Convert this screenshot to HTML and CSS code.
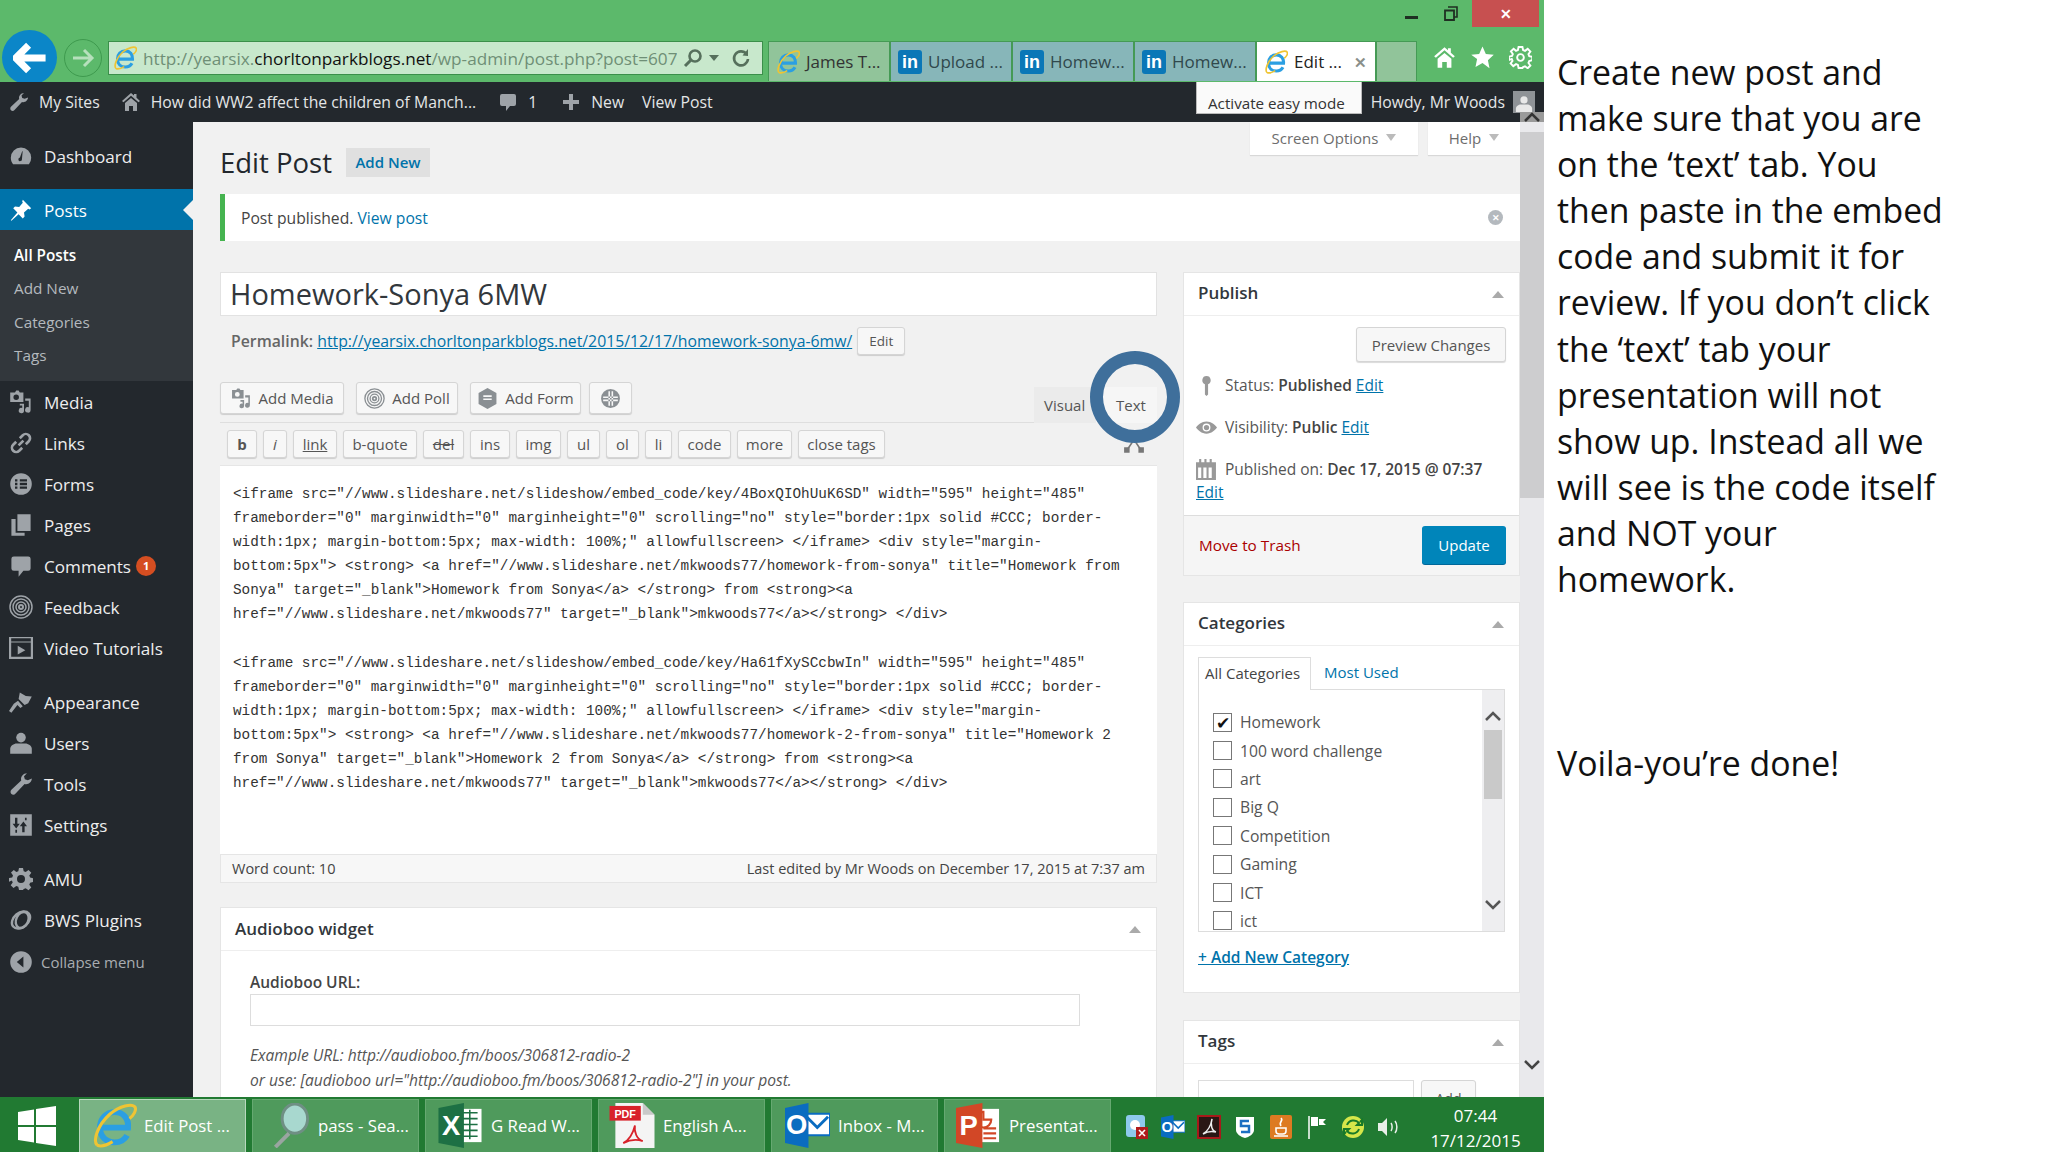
FILE: index.html
```html
<!DOCTYPE html>
<html lang="en">
<head>
<meta charset="utf-8">
<title>Edit Post</title>
<link rel="stylesheet" href="styles.css">
</head>
<body>
<svg class="defs" width="0" height="0" aria-hidden="true">
  <symbol id="ie" viewBox="0 0 32 32">
    <path d="M8 17.500h18c.6-6.500-3.500-11-9.500-11S6 11 6 17.500 10.500 28 16.500 28c4 0 7-1.800 8.800-5" fill="none" stroke="#2b9fe2" stroke-width="4.200"/>
    <path d="M4 30C1 27 4 16 13 8 20 2 29 0 31 3c1 2-1 6-4 8M4 30c3 1.500 7 0 11-2.500" fill="none" stroke="#efc433" stroke-width="2.200"/>
  </symbol>
  <symbol id="s-dash" viewBox="0 0 20 20"><path d="M10 3a8.500 8.500 0 0 0-8.500 8.500c0 2 .7 3.900 1.900 5.400h13.200a8.500 8.500 0 0 0 1.900-5.400A8.500 8.500 0 0 0 10 3zm.8 9.500a1.500 1.500 0 1 1-1.700-1.200L11 6l.4.100z" fill="currentColor"/></symbol>
  <symbol id="s-pin" viewBox="0 0 20 20"><path d="M11.500 1.500l7 7-1.500 1-1-.5-3.500 3 .5 3.500-1.500 1.500-3.500-3.500L2 19l-.5-.5 5.500-6.500L3.500 8.500 5 7l3.500.5 3-3.500-.5-1z" fill="currentColor"/></symbol>
  <symbol id="s-media" viewBox="0 0 20 20"><path d="M1 2h4l1-1.500h2L9 2h3v8H1zm5 1.800a2.300 2.300 0 1 0 0 4.600 2.300 2.300 0 0 0 0-4.600zM13.500 7H18v9.500a2.300 2.300 0 1 1-1.500-2.100V9h-3zM9 11.500h3.500V17a2.200 2.200 0 1 1-1.500-2v-2H9z" fill="currentColor" fill-rule="evenodd"/></symbol>
  <symbol id="s-link" viewBox="0 0 20 20"><path d="M8 12l4-4M9 6l2.500-2.500a3.500 3.500 0 0 1 5 5L14 11M11 14l-2.500 2.500a3.500 3.500 0 0 1-5-5L6 9" fill="none" stroke="currentColor" stroke-width="2.200"/></symbol>
  <symbol id="s-forms" viewBox="0 0 20 20"><path d="M10 1a9 9 0 1 1 0 18 9 9 0 0 1 0-18zM5 6v2h2V6zm4 0v2h6V6zm-4 3v2h2V9zm4 0v2h6V9zm-4 3v2h2v-2zm4 0v2h6v-2z" fill="currentColor" fill-rule="evenodd"/></symbol>
  <symbol id="s-hex" viewBox="0 0 20 20"><path d="M10 0l8.500 4.800v10.400L10 20l-8.500-4.800V4.800zM6 7v1.500h8V7zm0 3v1.500h8V10z" fill="currentColor" fill-rule="evenodd"/></symbol>
  <symbol id="s-pages" viewBox="0 0 20 20"><path d="M7 1h11v14H7zM2 5h3.500v11.500H13V19H2z" fill="currentColor"/></symbol>
  <symbol id="s-comment" viewBox="0 0 20 20"><path d="M4 2h12a2 2 0 0 1 2 2v8a2 2 0 0 1-2 2h-4l-4 5v-5H4a2 2 0 0 1-2-2V4a2 2 0 0 1 2-2z" fill="currentColor"/></symbol>
  <symbol id="s-feedback" viewBox="0 0 24 24"><g fill="none" stroke="currentColor"><circle cx="12" cy="12" r="11" stroke-width="1.500"/><circle cx="12" cy="12" r="8" stroke-width="1.500"/><circle cx="12" cy="12" r="5" stroke-width="1.500"/><circle cx="12" cy="12" r="2" stroke-width="2"/></g></symbol>
  <symbol id="s-video" viewBox="0 0 22 20"><path d="M0 0h22v20H0zm2 5v13h18V5zm6 3l7 4-7 4zM2 1v3h18V1z" fill="currentColor" fill-rule="evenodd"/></symbol>
  <symbol id="s-brush" viewBox="0 0 20 20"><path d="M9 2l5 3 5 .5-3 5.500-3 1.500L8 7.500zM7.500 9l4 4.500-2 1.500L7 12.500 2 19l-2-1.500 4-6z" fill="currentColor"/></symbol>
  <symbol id="s-users" viewBox="0 0 20 20"><circle cx="10" cy="5.500" r="4" fill="currentColor"/><path d="M1 19v-4c0-2.500 3-4.500 5.500-4.500h7c2.500 0 5.500 2 5.500 4.500v4z" fill="currentColor"/></symbol>
  <symbol id="s-wrench" viewBox="0 0 20 20"><path d="M19 5.500c0 3-3.200 5.400-6 4.500l-7.500 8c-1 1.200-2.500 1.300-3.500.3S1 15.500 2.200 14.500l8-7.500C9.300 4 12 1 15 1l-2.500 2.600.7 2.500 2.500.7z" fill="currentColor"/></symbol>
  <symbol id="s-settings" viewBox="0 0 20 20"><path d="M1 1h18v18H1zm4 3v5H3l3 4 3-4H7V4zm8 12v-5h2l-3-4-3 4h2v5zM5.300 14v2.500h1.400V14zm8-10v2h1.400V4z" fill="currentColor" fill-rule="evenodd"/></symbol>
  <symbol id="s-gear" viewBox="0 0 24 24"><path d="M10 1h4l.7 3.200 2 .8L19.500 3l2.800 2.800-2 2.800.8 2 3.200.7v3.600l-3.200.8-.8 2 2 2.700-2.800 2.800-2.800-2-2 .8L14 23h-4l-.7-3.200-2-.8-2.800 2-2.800-2.800 2-2.700-.8-2L0 14.700v-3.600l3.200-.7.800-2-2-2.800L4.800 3l2.500 2 2-.8zM12 8a4 4 0 1 0 0 8 4 4 0 0 0 0-8z" fill="currentColor" fill-rule="evenodd"/></symbol>
  <symbol id="s-gear-o" viewBox="0 0 24 24"><path d="M10 1h4l.7 3.200 2 .8L19.500 3l2.800 2.800-2 2.800.8 2 3.200.7v3.600l-3.200.8-.8 2 2 2.700-2.800 2.800-2.800-2-2 .8L14 23h-4l-.7-3.200-2-.8-2.800 2-2.800-2.800 2-2.700-.8-2L0 14.700v-3.600l3.200-.7.800-2-2-2.800L4.800 3l2.500 2 2-.8z" fill="none" stroke="currentColor" stroke-width="2"/><circle cx="12" cy="12" r="3.500" fill="none" stroke="currentColor" stroke-width="2"/></symbol>
  <symbol id="s-swirl" viewBox="0 0 20 20"><g fill="none" stroke="currentColor" stroke-width="2"><ellipse cx="10" cy="10" rx="8.500" ry="6" transform="rotate(-40 10 10)"/><ellipse cx="11" cy="10" rx="5" ry="7" transform="rotate(25 11 10)"/></g></symbol>
  <symbol id="s-collapse" viewBox="0 0 20 20"><path d="M10 1a9 9 0 1 1 0 18 9 9 0 0 1 0-18zm2 4.500L6.500 10l5.500 4.500z" fill="currentColor" fill-rule="evenodd"/></symbol>
  <symbol id="s-home" viewBox="0 0 20 20"><path d="M10 1l3 2.600V2h2.500v3.800L19 9l-1.500 1.200L10 3.700 2.500 10.200 1 9zM4 11l6-5 6 5v8h-4v-5H8v5H4z" fill="currentColor"/></symbol>
  <symbol id="s-star" viewBox="0 0 20 20"><path d="M10 .5l2.900 6.400 6.900.8-5.100 4.700 1.400 6.900L10 14.800l-6.100 3.500 1.400-6.900L.2 7.700l6.900-.8z" fill="currentColor"/></symbol>
  <symbol id="s-plus" viewBox="0 0 20 20"><path d="M8 2h4v6h6v4h-6v6H8v-6H2V8h6z" fill="currentColor"/></symbol>
  <symbol id="s-mag" viewBox="0 0 41 46"><ellipse cx="26" cy="16" rx="13" ry="15" fill="#a8d8cf" stroke="#6f8f84" stroke-width="3"/><path d="M20 31L6 45" stroke="#9aa5a1" stroke-width="4" fill="none"/></symbol>
  <symbol id="s-search" viewBox="0 0 20 20"><circle cx="12" cy="8" r="5.500" fill="none" stroke="currentColor" stroke-width="2.600"/><path d="M8 12l-6 6" stroke="currentColor" stroke-width="3"/></symbol>
  <symbol id="s-refresh" viewBox="0 0 20 20"><path d="M15.500 6A7 7 0 1 0 17 11" fill="none" stroke="currentColor" stroke-width="2.600"/><path d="M11.500 7.500L17 1v7z" fill="currentColor"/></symbol>
  <symbol id="s-thumb" viewBox="0 0 16 20"><path d="M8 1a4 4 0 0 1 1.500 7.700V18.500L8 20l-1.500-1.500V8.700A4 4 0 0 1 8 1z" fill="currentColor"/></symbol>
  <symbol id="s-eye" viewBox="0 0 24 14"><path d="M12 0c5.500 0 10 4 12 7-2 3-6.500 7-12 7S2 10 0 7c2-3 6.500-7 12-7zm0 2.500a4.500 4.500 0 1 0 0 9 4.500 4.500 0 0 0 0-9z" fill="currentColor" fill-rule="evenodd"/><circle cx="12" cy="7" r="3" fill="currentColor"/></symbol>
  <symbol id="s-cal" viewBox="0 0 20 20"><path d="M0 3h3V0h2v3h3V0h2v3h3V0h2v3h4v17H0zm2 5v10h3V8zm5 0v10h3V8zm5 0v10h3V8z" fill="currentColor" fill-rule="evenodd"/></symbol>
  <symbol id="s-globe" viewBox="0 0 20 20"><path d="M10 1a9 9 0 1 1 0 18 9 9 0 0 1 0-18zM3 8v1.500h14V8zm0 3v1.500h14V11zM8 3v14h1.500V3zm3 0v14h1.500V3z" fill="currentColor" fill-rule="evenodd"/></symbol>
  <symbol id="s-full" viewBox="0 0 20 20"><path d="M10 6l-6 9M10 6l6 9" fill="none" stroke="currentColor" stroke-width="1.500"/><path d="M7 3h6v5H7zM1 13h5v5H1zM14 13h5v5h-5z" fill="currentColor"/></symbol>
  <symbol id="s-restore" viewBox="0 0 14 15"><path d="M4 1h9v10h-3" fill="none" stroke="#1f2f22" stroke-width="1.600"/><path d="M1 4.500h9V14H1z" fill="none" stroke="#1f2f22" stroke-width="1.800"/></symbol>
  <symbol id="s-win" viewBox="0 0 40 40"><path d="M1 6l16-2.500V19H1zM19 3l20-3v19H19zM1 21h16v15.500L1 34zM19 21h20v19l-20-3z" fill="#fff"/></symbol>
  <symbol id="s-flag" viewBox="0 0 20 24"><path d="M2 1v23" stroke="#fff" stroke-width="1.500"/><path d="M4 2h7v9H4zM12 4h7l-3 3 3 3h-7z" fill="#fff"/></symbol>
  <symbol id="s-speaker" viewBox="0 0 24 22"><path d="M1 7h4l5-5v18l-5-5H1z" fill="#e8efe8"/><path d="M14 7c1.500 2 1.500 6 0 8M18 5c2.500 3 2.500 9 0 12" fill="none" stroke="#e8efe8" stroke-width="1.500"/></symbol>
  <symbol id="s-sync" viewBox="0 0 24 24"><circle cx="12" cy="12" r="11" fill="#d6e64a"/><path d="M6 10a7 7 0 0 1 12-2l-2 2h5V5l-2 2M18 14a7 7 0 0 1-12 2l2-2H3v5l2-2" fill="none" stroke="#187a28" stroke-width="2"/></symbol>
  <symbol id="s-shield" viewBox="0 0 20 24"><path d="M1 2h18v13c0 4-5 7-9 8-4-1-9-4-9-8z" fill="#fff"/><path d="M14 6H6v5h8v6H6" fill="none" stroke="#1c6fc2" stroke-width="2.500"/></symbol>
  <symbol id="s-excel" viewBox="0 0 46 46">
    <path d="M22 6h23v34H22z" fill="#fff"/>
    <path d="M26 10h15M26 16h15M26 22h15M26 28h15M26 34h15M33 7v30" stroke="#1d7044" stroke-width="1.600" fill="none"/>
    <path d="M1 5L27 0v46L1 41z" fill="#1d7044"/>
    <text class="svg-app svg-x" x="14" y="33" text-anchor="middle">X</text>
  </symbol>
  <symbol id="s-pdf" viewBox="0 0 46 46">
    <path d="M6 0h28l12 12v34H6z" fill="#f4f4f4"/>
    <path d="M34 0l12 12H34z" fill="#c9c9c9"/>
    <path d="M0 3h32v15H0z" fill="#d8222a"/>
    <text class="svg-app svg-pdf" x="16" y="15" text-anchor="middle">PDF</text>
    <path d="M26 23c-2 8-6 15-12 18 6-3 14-4 20-2-6-2-9-9-8-16z" fill="none" stroke="#d8222a" stroke-width="1.800"/>
  </symbol>
  <symbol id="s-outlook" viewBox="0 0 46 46">
    <path d="M20 11h26v22H20z" fill="#fff" stroke="#0a6cc0" stroke-width="2"/>
    <path d="M22 14l11 11 11-11" fill="none" stroke="#0a6cc0" stroke-width="3"/>
    <path d="M0 5L24 0v46L0 41z" fill="#0a6cc0"/>
    <text class="svg-app svg-o" x="12" y="32" text-anchor="middle">O</text>
  </symbol>
  <symbol id="s-ppt" viewBox="0 0 46 46">
    <path d="M22 6h22v34H22z" fill="#fff"/>
    <path d="M28 9a8 8 0 1 0 8 8h-8zM28 26h13M28 31h13M28 36h13" fill="none" stroke="#d24726" stroke-width="2.200"/>
    <path d="M0 5L27 0v46L0 41z" fill="#d24726"/>
    <text class="svg-app svg-x" x="13" y="33" text-anchor="middle">P</text>
  </symbol>
  <symbol id="s-qt" viewBox="0 0 24 24">
    <rect x="1" y="0" width="19" height="22" rx="3" fill="#8ec9ec"/>
    <circle cx="10" cy="10" r="5" fill="#fff"/>
    <rect x="11" y="12" width="12" height="12" fill="#b01c1c"/>
    <path d="M14 15l6 6M20 15l-6 6" stroke="#fff" stroke-width="1.600"/>
  </symbol>
  <symbol id="s-acrobat" viewBox="0 0 24 24">
    <rect x="1" y="1" width="22" height="22" fill="#2a1714" stroke="#a61a1a" stroke-width="2"/>
    <path d="M15 4c-1 6-4 12-9 15 5-3 9-3 13-2-4-1-6-7-4-13z" fill="none" stroke="#eee" stroke-width="1.500"/>
  </symbol>
  <symbol id="s-java" viewBox="0 0 24 24">
    <rect x="1" y="0" width="22" height="24" rx="2" fill="#dd7a22"/>
    <path d="M12 3c3 3-3 4 0 8M7 13h10v3a3 3 0 0 1-3 3h-4a3 3 0 0 1-3-3zM5 21h14" fill="none" stroke="#fff" stroke-width="1.600"/>
  </symbol>
</svg>

<div class="window">
  <header class="chrome">
    <div class="titlebar">
      <span class="win-min"></span>
      <svg class="win-restore"><use href="#s-restore"/></svg>
      <span class="win-close">&#x2715;</span>
    </div>
    <div class="navrow">
      <span class="nav-back"><svg class="nav-arrow" viewBox="0 0 24 24"><path d="M11 3L2 12l9 9M3 12h20" fill="none" stroke="#fff" stroke-width="5"/></svg></span>
      <span class="nav-forward"><svg class="nav-arrow-sm" viewBox="0 0 24 24"><path d="M13 4l8 8-8 8M20 12H2" fill="none" stroke="#b6e0bc" stroke-width="3"/></svg></span>
      <div class="address">
        <svg class="ic-ie"><use href="#ie"/></svg>
        <span class="url">http://yearsix.<b>chorltonparkblogs.net</b>/wp-admin/post.php?post=607</span>
        <svg class="addr-ic"><use href="#s-search"/></svg>
        <span class="addr-drop"></span>
        <svg class="addr-ic"><use href="#s-refresh"/></svg>
      </div>
      <div class="tabs">
        <div class="tab tab-ie"><svg class="ic-ie"><use href="#ie"/></svg><span>James T...</span></div>
        <div class="tab tab-li"><span class="li">in</span><span>Upload ...</span></div>
        <div class="tab tab-li"><span class="li">in</span><span>Homew...</span></div>
        <div class="tab tab-li"><span class="li">in</span><span>Homew...</span></div>
        <div class="tab tab-active"><svg class="ic-ie"><use href="#ie"/></svg><span>Edit ...</span><span class="tab-x">&#x2715;</span></div>
        <div class="tab tab-new"></div>
      </div>
      <div class="tools">
        <svg class="tool-ic"><use href="#s-home"/></svg>
        <svg class="tool-ic"><use href="#s-star"/></svg>
        <svg class="tool-ic"><use href="#s-gear-o"/></svg>
      </div>
    </div>
  </header>

  <div class="adminbar">
    <div class="ab-item"><svg class="ab-ic"><use href="#s-wrench"/></svg>My Sites</div>
    <div class="ab-item"><svg class="ab-ic"><use href="#s-home"/></svg>How did WW2 affect the children of Manch...</div>
    <div class="ab-item"><svg class="ab-ic"><use href="#s-comment"/></svg>1</div>
    <div class="ab-item"><svg class="ab-ic"><use href="#s-plus"/></svg>New</div>
    <div class="ab-item">View Post</div>
    <div class="ab-right">
      <span>Howdy, Mr Woods</span>
      <span class="avatar"><svg class="avatar-ic"><use href="#s-users"/></svg></span>
    </div>
    <div class="easy-tip">Activate easy mode</div>
  </div>

  <div class="main">
    <nav class="sidebar">
      <a class="mi"><svg class="mi-ic"><use href="#s-dash"/></svg>Dashboard</a>
      <a class="mi mi-active mi-gap"><svg class="mi-ic"><use href="#s-pin"/></svg>Posts</a>
      <div class="submenu">
        <a class="sub sub-current">All Posts</a>
        <a class="sub">Add New</a>
        <a class="sub">Categories</a>
        <a class="sub">Tags</a>
      </div>
      <a class="mi"><svg class="mi-ic"><use href="#s-media"/></svg>Media</a>
      <a class="mi"><svg class="mi-ic"><use href="#s-link"/></svg>Links</a>
      <a class="mi"><svg class="mi-ic"><use href="#s-forms"/></svg>Forms</a>
      <a class="mi"><svg class="mi-ic"><use href="#s-pages"/></svg>Pages</a>
      <a class="mi"><svg class="mi-ic"><use href="#s-comment"/></svg>Comments<span class="badge">1</span></a>
      <a class="mi"><svg class="mi-ic"><use href="#s-feedback"/></svg>Feedback</a>
      <a class="mi"><svg class="mi-ic"><use href="#s-video"/></svg>Video Tutorials</a>
      <a class="mi mi-gap"><svg class="mi-ic"><use href="#s-brush"/></svg>Appearance</a>
      <a class="mi"><svg class="mi-ic"><use href="#s-users"/></svg>Users</a>
      <a class="mi"><svg class="mi-ic"><use href="#s-wrench"/></svg>Tools</a>
      <a class="mi"><svg class="mi-ic"><use href="#s-settings"/></svg>Settings</a>
      <a class="mi mi-gap"><svg class="mi-ic"><use href="#s-gear"/></svg>AMU</a>
      <a class="mi"><svg class="mi-ic"><use href="#s-swirl"/></svg>BWS Plugins</a>
      <a class="mi mi-collapse"><svg class="mi-ic"><use href="#s-collapse"/></svg>Collapse menu</a>
    </nav>

    <section class="content">
      <div class="screen-meta">
        <div class="meta-tab meta-screen">Screen Options<i class="caret"></i></div>
        <div class="meta-tab meta-help">Help<i class="caret"></i></div>
      </div>
      <div class="heading">
        <h1>Edit Post</h1>
        <a class="add-new">Add New</a>
      </div>
      <div class="notice">
        <span>Post published. <a>View post</a></span>
        <span class="dismiss">&#x2715;</span>
      </div>
      <div class="columns">
        <div class="col-main">
          <div class="title-box">Homework-Sonya 6MW</div>
          <div class="permalink">
            <span><b>Permalink:</b> <a class="ul">http://yearsix.chorltonparkblogs.net/2015/12/17/homework-sonya-6mw/</a></span>
            <span class="btn btn-edit">Edit</span>
          </div>
          <div class="media-row">
            <span class="btn btn-media w-media"><svg class="btn-ic"><use href="#s-media"/></svg>Add Media</span>
            <span class="btn btn-media w-poll"><svg class="btn-ic"><use href="#s-feedback"/></svg>Add Poll</span>
            <span class="btn btn-media w-form"><svg class="btn-ic"><use href="#s-hex"/></svg>Add Form</span>
            <span class="btn btn-media btn-globe"><svg class="btn-ic"><use href="#s-globe"/></svg></span>
            <div class="editor-tabs">
              <span class="etab">Visual</span>
              <span class="etab etab-on">Text</span>
            </div>
          </div>
          <div class="qt-bar">
            <span class="qt q-b"><b>b</b></span>
            <span class="qt q-i"><i>i</i></span>
            <span class="qt q-link"><u>link</u></span>
            <span class="qt q-quote">b-quote</span>
            <span class="qt q-del"><s>del</s></span>
            <span class="qt q-ins">ins</span>
            <span class="qt q-img">img</span>
            <span class="qt q-ul">ul</span>
            <span class="qt q-ol">ol</span>
            <span class="qt q-li">li</span>
            <span class="qt q-code">code</span>
            <span class="qt q-more">more</span>
            <span class="qt q-close">close tags</span>
            <svg class="fullscreen"><use href="#s-full"/></svg>
          </div>
          <div class="code">&lt;iframe src="//www.slideshare.net/slideshow/embed_code/key/4BoxQIOhUuK6SD" width="595" height="485"
frameborder="0" marginwidth="0" marginheight="0" scrolling="no" style="border:1px solid #CCC; border-
width:1px; margin-bottom:5px; max-width: 100%;" allowfullscreen> &lt;/iframe> &lt;div style="margin-
bottom:5px"> &lt;strong> &lt;a href="//www.slideshare.net/mkwoods77/homework-from-sonya" title="Homework from
Sonya" target="_blank">Homework from Sonya&lt;/a> &lt;/strong> from &lt;strong>&lt;a
href="//www.slideshare.net/mkwoods77" target="_blank">mkwoods77&lt;/a>&lt;/strong> &lt;/div>

&lt;iframe src="//www.slideshare.net/slideshow/embed_code/key/Ha61fXySCcbwIn" width="595" height="485"
frameborder="0" marginwidth="0" marginheight="0" scrolling="no" style="border:1px solid #CCC; border-
width:1px; margin-bottom:5px; max-width: 100%;" allowfullscreen> &lt;/iframe> &lt;div style="margin-
bottom:5px"> &lt;strong> &lt;a href="//www.slideshare.net/mkwoods77/homework-2-from-sonya" title="Homework 2
from Sonya" target="_blank">Homework 2 from Sonya&lt;/a> &lt;/strong> from &lt;strong>&lt;a
href="//www.slideshare.net/mkwoods77" target="_blank">mkwoods77&lt;/a>&lt;/strong> &lt;/div></div>
          <div class="statusbar">
            <span>Word count: 10</span>
            <span>Last edited by Mr Woods on December 17, 2015 at 7:37 am</span>
          </div>
          <div class="box box-audio">
            <div class="box-head"><h2>Audioboo widget</h2><i class="collapse"></i></div>
            <div class="audio-body">
              <label>Audioboo URL:</label>
              <div class="audio-input"></div>
              <p>Example URL: http://audioboo.fm/boos/306812-radio-2</p>
              <p>or use: [audioboo url="http://audioboo.fm/boos/306812-radio-2"] in your post.</p>
            </div>
          </div>
        </div>

        <aside class="col-side">
          <div class="box box-publish">
            <div class="box-head"><h2>Publish</h2><i class="collapse"></i></div>
            <div class="pub-body">
              <div class="pub-preview"><span class="btn btn-preview">Preview Changes</span></div>
              <div class="pub-row"><svg class="pub-ic"><use href="#s-thumb"/></svg><span>Status: <b>Published</b> <a class="ul">Edit</a></span></div>
              <div class="pub-row"><svg class="pub-ic"><use href="#s-eye"/></svg><span>Visibility: <b>Public</b> <a class="ul">Edit</a></span></div>
              <div class="pub-row"><svg class="pub-ic"><use href="#s-cal"/></svg><span>Published on: <b>Dec 17, 2015 @ 07:37</b></span></div>
              <a class="ul pub-edit">Edit</a>
            </div>
            <div class="pub-foot">
              <a class="trash">Move to Trash</a>
              <span class="update">Update</span>
            </div>
          </div>

          <div class="box box-cats">
            <div class="box-head"><h2>Categories</h2><i class="collapse"></i></div>
            <div class="cat-body">
              <div class="cat-tabs">
                <span class="cat-tab cat-tab-on">All Categories</span>
                <a class="cat-tab">Most Used</a>
              </div>
              <div class="cat-panel">
                <ul class="cat-list">
                  <li><span class="check checked">&#x2714;</span>Homework</li>
                  <li><span class="check"></span>100 word challenge</li>
                  <li><span class="check"></span>art</li>
                  <li><span class="check"></span>Big Q</li>
                  <li><span class="check"></span>Competition</li>
                  <li><span class="check"></span>Gaming</li>
                  <li><span class="check"></span>ICT</li>
                  <li><span class="check"></span>ict</li>
                </ul>
                <div class="cat-scroll">
                  <svg class="chev" viewBox="0 0 16 10"><path d="M1 9l7-7 7 7" fill="none" stroke="currentColor" stroke-width="2.500"/></svg>
                  <span class="cat-thumb"></span>
                  <svg class="chev chev-down" viewBox="0 0 16 10"><path d="M1 1l7 7 7-7" fill="none" stroke="currentColor" stroke-width="2.500"/></svg>
                </div>
              </div>
              <a class="add-cat">+ Add New Category</a>
            </div>
          </div>

          <div class="box box-tags">
            <div class="box-head"><h2>Tags</h2><i class="collapse"></i></div>
            <div class="tags-body">
              <div class="tags-input"></div>
              <span class="btn btn-add">Add</span>
            </div>
          </div>
        </aside>
      </div>
    </section>

    <div class="scrollbar">
      <svg class="sb-up" viewBox="0 0 24 10"><path d="M5 9l7-7 7 7" fill="none" stroke="currentColor" stroke-width="2.500"/></svg>
      <span class="sb-thumb"></span>
      <svg class="sb-down" viewBox="0 0 16 10"><path d="M1 1l7 7 7-7" fill="none" stroke="currentColor" stroke-width="2.500"/></svg>
    </div>

    <span class="ring"></span>
  </div>

  <footer class="taskbar">
    <div class="start"><svg class="start-ic"><use href="#s-win"/></svg></div>
    <div class="task task-on"><svg class="task-ic i-ie"><use href="#ie"/></svg><span>Edit Post ...</span></div>
    <div class="task"><svg class="task-ic i-mag"><use href="#s-mag"/></svg><span>pass - Sea...</span></div>
    <div class="task"><svg class="task-ic i-excel"><use href="#s-excel"/></svg><span>G Read W...</span></div>
    <div class="task"><svg class="task-ic i-pdf"><use href="#s-pdf"/></svg><span>English A...</span></div>
    <div class="task"><svg class="task-ic i-out"><use href="#s-outlook"/></svg><span>Inbox - M...</span></div>
    <div class="task"><svg class="task-ic i-ppt"><use href="#s-ppt"/></svg><span>Presentat...</span></div>
    <div class="tray">
      <svg class="tray-ic"><use href="#s-qt"/></svg>
      <svg class="tray-ic"><use href="#s-outlook"/></svg>
      <svg class="tray-ic"><use href="#s-acrobat"/></svg>
      <svg class="tray-ic"><use href="#s-shield"/></svg>
      <svg class="tray-ic"><use href="#s-java"/></svg>
      <svg class="tray-ic"><use href="#s-flag"/></svg>
      <svg class="tray-ic"><use href="#s-sync"/></svg>
      <svg class="tray-ic"><use href="#s-speaker"/></svg>
    </div>
    <div class="clock"><span>07:44</span><span>17/12/2015</span></div>
  </footer>
</div>

<aside class="notes">
  <p>Create new post and<br>make sure that you are<br>on the ‘text’ tab. You<br>then paste in the embed<br>code and submit it for<br>review. If you don’t click<br>the ‘text’ tab your<br>presentation will not<br>show up. Instead all we<br>will see is the code itself<br>and NOT your<br>homework.</p>
  <p class="notes-done">Voila-you’re done!</p>
</aside>
</body>
</html>
```

FILE: styles.css
```css
* { box-sizing: border-box; }
html, body { margin: 0; height: 100%; }
body { display: flex; width: 2048px; height: 1152px; overflow: hidden; background: #fff; font-family: "Open Sans", "Noto Sans", sans-serif; color: #444; }
.defs { position: absolute; }
a { color: #0073aa; }
.ul { text-decoration: underline; }

.window { width: 1544px; height: 1152px; display: flex; flex-direction: column; flex: none; }

/* Browser chrome */
.chrome { height: 82px; background: #5cb96b; flex: none; }
.titlebar { height: 27px; display: flex; justify-content: flex-end; padding-right: 5px; }
.win-min { width: 13px; height: 3px; background: #1f2f22; margin: 16px 26px 0 0; }
.win-restore { width: 14px; height: 15px; margin: 6px 14px 0 0; }
.win-close { width: 67px; height: 27px; background: #c75050; color: #fff; font-size: 14px; font-weight: 700; text-align: center; line-height: 27px; }
.navrow { height: 55px; display: flex; align-items: flex-start; position: relative; }
.nav-back { width: 55px; height: 55px; border-radius: 50%; background: #0b86c8; margin: 3px 0 0 2px; display: flex; align-items: center; justify-content: center; flex: none; }
.nav-arrow { width: 34px; height: 34px; }
.nav-forward { width: 38px; height: 38px; border-radius: 50%; border: 1px solid #3e9a4e; margin: 12px 6px 0 7px; display: flex; align-items: center; justify-content: center; flex: none; }
.nav-arrow-sm { width: 24px; height: 24px; }
.address { width: 655px; height: 34px; margin-top: 14px; background: #c8e8cc; border: 1px solid #3b8f4a; display: flex; align-items: center; padding: 0 6px 0 4px; flex: none; }
.ic-ie { width: 24px; height: 24px; flex: none; }
.url { width: 534px; margin-left: 6px; overflow: hidden; white-space: nowrap; font-size: 17.200px; color: #6f8f76; flex: none; }
.url b { font-weight: 400; color: #111; }
.addr-ic { width: 20px; height: 20px; color: #56705c; flex: none; margin-left: 6px; }
.addr-drop { width: 0; height: 0; border: 5px solid transparent; border-top: 6px solid #56705c; border-bottom: 0; margin: 0 6px 0 6px; flex: none; }
.tabs { display: flex; margin: 14px 0 0 5px; height: 40px; flex: none; }
.tab { width: 122px; height: 40px; display: flex; align-items: center; gap: 6px; padding-left: 7px; font-size: 17px; white-space: nowrap; color: #333; border: 1px solid #459a55; border-width: 1px 1px 0 1px; }
.tab-ie { background: #91c49a; }
.tab-li { background: #87b6b9; color: #30484c; }
.tab-active { background: #fff; color: #222; width: 120px; }
.tab-new { width: 41px; background: #91c49a; }
.tab-x { color: #8a8f8a; font-size: 15px; font-weight: 700; margin-left: 6px; }
.li { width: 24px; height: 24px; background: #0a77b7; color: #fff; border-radius: 3px; font: 700 18px/24px "Liberation Sans", sans-serif; text-align: center; flex: none; }
.tools { display: flex; gap: 15px; margin: 19px 0 0 16px; }
.tool-ic { width: 23px; height: 23px; color: #fff; flex: none; }

/* WP admin bar */
.adminbar { height: 40px; background: #23282d; flex: none; display: flex; align-items: center; color: #e4e6e7; font-size: 15.750px; position: relative; white-space: nowrap; }
.ab-item { display: flex; align-items: center; gap: 10px; margin-left: 9px; }
.ab-item:nth-child(2) { margin-left: 21px; }
.ab-item:nth-child(3) { margin-left: 22px; }
.ab-item:nth-child(4) { margin-left: 24px; }
.ab-item:nth-child(5) { margin-left: 18px; }
.ab-ic { width: 20px; height: 20px; color: #9ea3a8; flex: none; }
.ab-right { margin-left: auto; display: flex; align-items: center; gap: 8px; padding-right: 9px; }
.avatar { width: 22px; height: 22px; background: #8f9397; display: flex; align-items: flex-end; justify-content: center; flex: none; }
.avatar-ic { width: 18px; height: 18px; color: #e8e8e8; }
.easy-tip { position: absolute; left: 1196px; top: 0; width: 166px; height: 32px; background: #fafafa; border: 1px solid #bbb; border-top: 0; color: #333; font-size: 15.200px; padding: 11px 0 0 11px; line-height: 20px; }

/* Main */
.main { flex: 1; min-height: 0; display: flex; background: #f1f1f1; position: relative; }
.sidebar { width: 193px; flex: none; background: #23282d; padding-top: 13px; display: flex; flex-direction: column; overflow: hidden; position: relative; }
.mi { height: 41px; flex: none; display: flex; align-items: center; padding: 1px 0 0 9px; gap: 11px; color: #eee; font-size: 17.100px; white-space: nowrap; position: relative; }
.mi-gap { margin-top: 13px; }
.mi-ic { width: 24px; height: 24px; color: #9ea3a8; flex: none; }
.mi-active { background: #0073aa; color: #fff; }
.mi-active .mi-ic { color: #fff; }
.mi-active::after { content: ""; position: absolute; right: 0; top: 50%; margin-top: -10px; border: 10px solid transparent; border-left: 0; border-right-color: #f1f1f1; }
.mi-collapse { color: #a9adb1; font-size: 15px; gap: 8px; padding-top: 3px; }
.submenu { background: #32373c; height: 151px; padding-top: 9px; flex: none; }
.sub { display: block; height: 33.300px; line-height: 33px; padding-left: 14px; font-size: 15.300px; color: #b4b9be; }
.sub-current { color: #fff; font-weight: 600; }
.badge { width: 20px; height: 20px; border-radius: 50%; background: #d54e21; color: #fff; font-size: 11px; font-weight: 700; text-align: center; line-height: 20px; margin-left: -6px; }

.content { flex: 1; min-width: 0; padding-left: 27px; overflow: hidden; }
.screen-meta { height: 26px; display: flex; justify-content: flex-end; gap: 10px; }
.meta-tab { height: 33px; background: #fff; box-shadow: 0 1px 1px rgba(0,0,0,.1); font-size: 15px; line-height: 20px; padding-bottom: 2px; color: #6d6d6d; display: flex; align-items: center; justify-content: center; gap: 8px; flex: none; }
.meta-screen { width: 168px; }
.meta-help { width: 92px; }
.caret { width: 0; height: 0; border: 5px solid transparent; border-top: 7px solid #bbb; border-bottom: 0; }
.heading { height: 29px; display: flex; align-items: center; gap: 14px; }
.heading h1 { margin: 0; font-size: 27.500px; font-weight: 400; color: #23282d; white-space: nowrap; }
.add-new { width: 84px; height: 29px; background: #e0e0e0; font-size: 15px; font-weight: 600; text-align: center; line-height: 29px; }
.notice { height: 47px; margin-top: 17px; background: #fff; border-left: 5px solid #46b450; display: flex; align-items: center; justify-content: space-between; padding: 0 17px 0 16px; font-size: 15.700px; color: #444; }
.dismiss { width: 15px; height: 15px; border-radius: 50%; background: #b4b9be; color: #fff; font-size: 9px; font-weight: 700; text-align: center; line-height: 15px; }

.columns { display: flex; gap: 26px; margin-top: 31px; }
.col-main { width: 937px; flex: none; }
.col-side { width: 337px; flex: none; }
.title-box { height: 44px; background: #fff; border: 1px solid #e2e2e2; padding-left: 9px; font-size: 29px; line-height: 41px; color: #32373c; white-space: nowrap; }
.permalink { height: 28px; margin-top: 11px; padding-left: 11px; display: flex; align-items: center; gap: 5px; font-size: 15.800px; line-height: 20px; color: #666; white-space: nowrap; }
.permalink b { font-weight: 600; }
.btn { background: #f7f7f7; border: 1px solid #d5d5d5; box-shadow: 0 1px 1px rgba(0,0,0,.15); border-radius: 3px; color: #555; display: flex; align-items: center; justify-content: center; white-space: nowrap; flex: none; }
.btn-edit { width: 48px; height: 28px; font-size: 13.500px; }
.media-row { height: 41px; margin-top: 27px; display: flex; align-items: flex-start; gap: 12px; position: relative; border-bottom: 1px solid #dedede; }
.btn-media { height: 32px; font-size: 15px; gap: 7px; }
.w-media { width: 124px; }
.w-poll { width: 102px; }
.w-form { width: 111px; }
.btn-globe { width: 43px; margin-left: -4px; }
.btn-ic { width: 21px; height: 21px; color: #8a8f93; flex: none; }
.editor-tabs { margin-left: auto; display: flex; height: 41px; margin-top: 5px; }
.etab { width: 62px; height: 36px; background: #ebebeb; font-size: 15px; color: #555; display: flex; align-items: center; padding-left: 10px; }
.etab-on { background: #f6f6f6; padding-left: 20px; width: 61px; }
.qt-bar { height: 43px; display: flex; align-items: flex-start; gap: 6px; padding: 7px 0 0 7px; position: relative; border-bottom: 1px solid #e6e6e6; }
.qt { height: 28px; background: #f7f7f7; border: 1px solid #d5d5d5; box-shadow: 0 1px 1px rgba(0,0,0,.15); border-radius: 3px; font-size: 15px; color: #555; display: flex; align-items: center; justify-content: center; white-space: nowrap; flex: none; }
.q-b { width: 30px; } .q-i { width: 24px; } .q-link { width: 44px; } .q-quote { width: 74px; }
.q-del { width: 41px; } .q-ins { width: 40px; } .q-img { width: 45px; } .q-ul { width: 33px; }
.q-ol { width: 33px; } .q-li { width: 27px; } .q-code { width: 53px; } .q-more { width: 55px; } .q-close { width: 87px; }
.fullscreen { width: 22px; height: 22px; color: #777; margin: 3px 0 0 auto; position: relative; left: -12px; }
.code { height: 388px; background: #fff; padding: 16px 0 0 13px; font: 14.350px/24.100px "Liberation Mono", monospace; color: #333; white-space: pre; overflow: hidden; }
.statusbar { height: 29px; background: #f7f7f7; border: 1px solid #e5e5e5; display: flex; align-items: center; justify-content: space-between; padding: 0 11px; font-size: 14.500px; color: #444; white-space: nowrap; }

.box { background: #fff; border: 1px solid #e5e5e5; }
.box-head { height: 43px; border-bottom: 1px solid #eee; display: flex; align-items: center; justify-content: space-between; padding: 0 13px 0 14px; }
.box-head h2 { margin: 0; font-size: 17px; line-height: 22px; font-weight: 600; color: #32373c; }
.col-side .box-head h2 { margin-top: -2px; }
.collapse { width: 0; height: 0; border: 6px solid transparent; border-bottom: 7px solid #aaa; border-top: 0; margin-right: 2px; }
.box-audio { margin-top: 24px; height: 300px; }
.audio-body { padding: 21px 29px; font-size: 16.100px; color: #555; }
.audio-body label { display: block; font-weight: 600; line-height: 20px; color: #444; font-size: 15.500px; }
.audio-input { width: 830px; height: 32px; border: 1px solid #ddd; margin: 2px 0 0 0; background: #fff; }
.audio-body p { margin: 0; font-style: italic; line-height: 32px; font-size: 15.600px; white-space: nowrap; }
.audio-input + p { margin-top: 13px; }
.audio-body p + p { margin-top: -7px; }

.box-publish { height: 304px; display: flex; flex-direction: column; }
.pub-body { flex: 1; padding: 11px 13px 0 12px; font-size: 15.500px; color: #555; white-space: nowrap; }
.pub-preview { display: flex; justify-content: flex-end; }
.btn-preview { width: 150px; height: 35px; font-size: 15px; }
.pub-row { display: flex; align-items: center; gap: 8px; height: 42px; }
.pub-preview + .pub-row { margin-top: 2px; }
.pub-row b { font-weight: 600; color: #444; }
.pub-ic { width: 21px; height: 21px; color: #999; flex: none; }
.pub-edit { display: block; line-height: 18px; margin-top: -7px; }
.pub-foot { height: 60px; background: #f5f5f5; border-top: 1px solid #ddd; display: flex; align-items: center; justify-content: space-between; padding: 0 13px 2px 15px; }
.trash { color: #a00; font-size: 15.300px; }
.update { width: 84px; height: 38px; background: #0085ba; color: #fff; font-size: 15px; border-radius: 3px; display: flex; align-items: center; justify-content: center; box-shadow: 0 1px 0 #006799; }
.box-cats { margin-top: 26px; height: 391px; }
.cat-body { padding: 10px 14px 0 14px; }
.cat-tabs { display: flex; height: 33px; font-size: 15px; }
.cat-tab { height: 33px; padding: 0 0 2px 6px; display: flex; align-items: center; white-space: nowrap; }
.cat-tab-on { width: 113px; border: 1px solid #ddd; border-bottom: 0; background: #fff; position: relative; top: 1px; color: #444; }
.cat-tab:not(.cat-tab-on) { padding-left: 13px; font-weight: 500; }
.cat-panel { height: 243px; border: 1px solid #ddd; display: flex; overflow: hidden; }
.cat-list { flex: 1; list-style: none; margin: 0; padding: 18px 0 0 14px; font-size: 15.700px; color: #555; }
.cat-list li { height: 28.400px; display: flex; align-items: center; gap: 8px; white-space: nowrap; }
.check { width: 19px; height: 19px; border: 1px solid #777; background: #fff; display: flex; align-items: center; justify-content: center; color: #111; font-size: 17px; line-height: 1; flex: none; overflow: hidden; }
.cat-scroll { width: 22px; background: #eeeef0; flex: none; display: flex; flex-direction: column; align-items: center; padding-top: 21px; color: #555; }
.chev { width: 16px; height: 10px; flex: none; }
.cat-thumb { width: 18px; height: 69px; background: #c9c9c9; margin-top: 9px; flex: none; }
.chev-down { margin-top: 101px; }
.add-cat { display: block; margin-top: 14px; font-size: 15.500px; font-weight: 600; text-decoration: underline; }
.box-tags { margin-top: 27px; height: 200px; }
.tags-body { display: flex; gap: 7px; padding: 16px 0 0 14px; align-items: flex-start; }
.tags-input { width: 216px; height: 36px; border: 1px solid #ddd; }
.btn-add { width: 55px; height: 36px; font-size: 14px; }

.scrollbar { width: 24px; flex: none; background: #e9e9ec; display: flex; flex-direction: column; align-items: center; color: #444; }
.sb-up { position: absolute; right: 0; top: -10px; width: 24px; height: 10px; background: #9a9a9a; color: #333; }
.sb-thumb { width: 100%; height: 366px; margin-top: 10px; background: #cdcdcf; flex: none; }
.sb-down { width: 16px; height: 10px; margin-top: auto; margin-bottom: 27px; }
.ring { position: absolute; left: 1090px; top: 229px; width: 90px; height: 92px; border: 13px solid #3f6f9b; border-radius: 50%; }

/* Taskbar */
.taskbar { height: 55px; background: #217a32; flex: none; display: flex; gap: 6px; padding-top: 2px; color: #fff; overflow: hidden; }
.start { width: 73px; display: flex; align-items: center; justify-content: center; flex: none; }
.start-ic { width: 40px; height: 40px; }
.task { width: 167px; height: 60px; flex: none; display: flex; align-items: center; padding: 0 0 8px 10px; background: #4f9a5c; border: 1px solid #66a971; font-size: 16.800px; white-space: nowrap; }
.task-on { background: #79b384; border-color: #b7d8bd; }
.task-ic { height: 45px; width: 46px; margin-right: 8px; flex: none; }
.i-ie { width: 48px; margin-right: 6px; }
.i-mag { width: 41px; margin-left: 6px; }
.i-excel { margin-left: 1px; }
.i-out { margin-left: 3px; width: 45px; }
.i-ppt { margin-left: 1px; width: 45px; }
.svg-app { font-family: "Liberation Sans", sans-serif; font-weight: 700; fill: #fff; }
.svg-x { font-size: 28px; }
.svg-o { font-size: 28px; }
.svg-pdf { font-size: 11px; }
.tray { display: flex; align-items: center; gap: 12px; margin-left: 8px; flex: none; padding-top: 2px; height: 53px; }
.tray-ic { width: 24px; height: 24px; flex: none; }
.clock { flex: 1; display: flex; flex-direction: column; align-items: center; font-size: 17px; line-height: 25px; padding: 4px 0 0 0; white-space: nowrap; }

/* Notes */
.notes { flex: 1; padding: 49px 0 0 13px; font-size: 33.800px; line-height: 46.100px; color: #111; white-space: nowrap; }
.notes p { margin: 0; }
.notes-done { margin-top: 138px !important; }
```
